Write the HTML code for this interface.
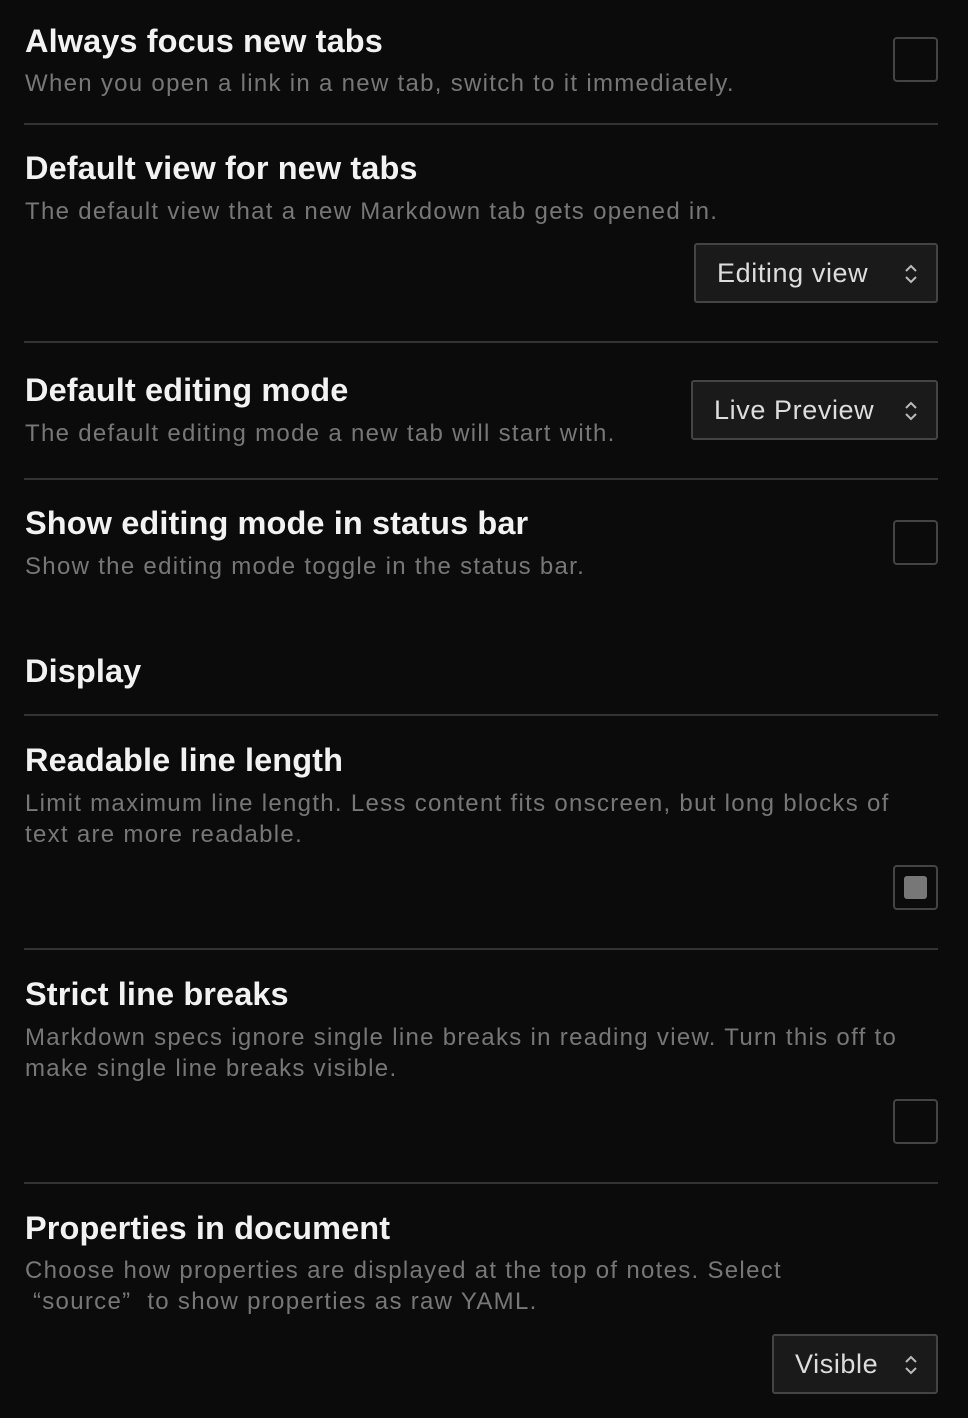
<!DOCTYPE html>
<html><head><meta charset="utf-8"><style>
body{margin:0;width:968px;height:1418px;background:#0b0b0b;font-family:"Liberation Sans",sans-serif;position:relative;overflow:hidden}
.t{position:absolute;left:25px;font-size:32.5px;font-weight:bold;color:#f2f2f2;line-height:36px;white-space:nowrap;letter-spacing:0.1px}
.d{position:absolute;left:25px;font-size:24px;color:#777;line-height:31px;width:890px;letter-spacing:1.3px}
.hr{position:absolute;left:24px;width:914px;height:2px;background:#333}
.cb{position:absolute;left:893px;width:41px;height:41px;border:2px solid #444;border-radius:4px;box-sizing:content-box}
.cb i{position:absolute;left:9px;top:9px;width:23px;height:23px;background:#777;border-radius:3px}
.dd{position:absolute;height:56px;border:2px solid #444;border-radius:3px;background:#1a1a1a;color:#ddd;font-size:27px;line-height:56px;padding-left:21px;box-sizing:border-box;letter-spacing:0.6px}
.dd svg{position:absolute;right:18px;top:19px}
</style></head><body>
<div class="t" style="top:23px">Always focus new tabs</div>
<div class="d" style="top:68px">When you open a link in a new tab, switch to it immediately.</div>
<div class="cb" style="top:37px"></div>
<div class="hr" style="top:123px"></div>

<div class="t" style="top:150px">Default view for new tabs</div>
<div class="d" style="top:196px">The default view that a new Markdown tab gets opened in.</div>
<div class="dd" style="top:243px;left:694px;width:244px;height:60px">Editing view<svg width="14" height="20" viewBox="0 0 14 20"><path d="M2 7l5-5 5 5M2 13l5 5 5-5" fill="none" stroke="#bbb" stroke-width="2"/></svg></div>
<div class="hr" style="top:341px"></div>

<div class="t" style="top:372px">Default editing mode</div>
<div class="d" style="top:418px">The default editing mode a new tab will start with.</div>
<div class="dd" style="top:380px;left:691px;width:247px;height:60px">Live Preview<svg width="14" height="20" viewBox="0 0 14 20"><path d="M2 7l5-5 5 5M2 13l5 5 5-5" fill="none" stroke="#bbb" stroke-width="2"/></svg></div>
<div class="hr" style="top:478px"></div>

<div class="t" style="top:505px">Show editing mode in status bar</div>
<div class="d" style="top:551px">Show the editing mode toggle in the status bar.</div>
<div class="cb" style="top:520px"></div>

<div class="t" style="top:653px">Display</div>
<div class="hr" style="top:714px"></div>

<div class="t" style="top:742px">Readable line length</div>
<div class="d" style="top:788px">Limit maximum line length. Less content fits onscreen, but long blocks of<br>text are more readable.</div>
<div class="cb" style="top:865px"><i></i></div>
<div class="hr" style="top:948px"></div>

<div class="t" style="top:976px">Strict line breaks</div>
<div class="d" style="top:1022px">Markdown specs ignore single line breaks in reading view. Turn this off to<br>make single line breaks visible.</div>
<div class="cb" style="top:1099px"></div>
<div class="hr" style="top:1182px"></div>

<div class="t" style="top:1210px">Properties in document</div>
<div class="d" style="top:1255px">Choose how properties are displayed at the top of notes. Select<br>&nbsp;“source”&nbsp; to show properties as raw YAML.</div>
<div class="dd" style="top:1334px;left:772px;width:166px;height:60px">Visible<svg width="14" height="20" viewBox="0 0 14 20"><path d="M2 7l5-5 5 5M2 13l5 5 5-5" fill="none" stroke="#bbb" stroke-width="2"/></svg></div>
</body></html>
